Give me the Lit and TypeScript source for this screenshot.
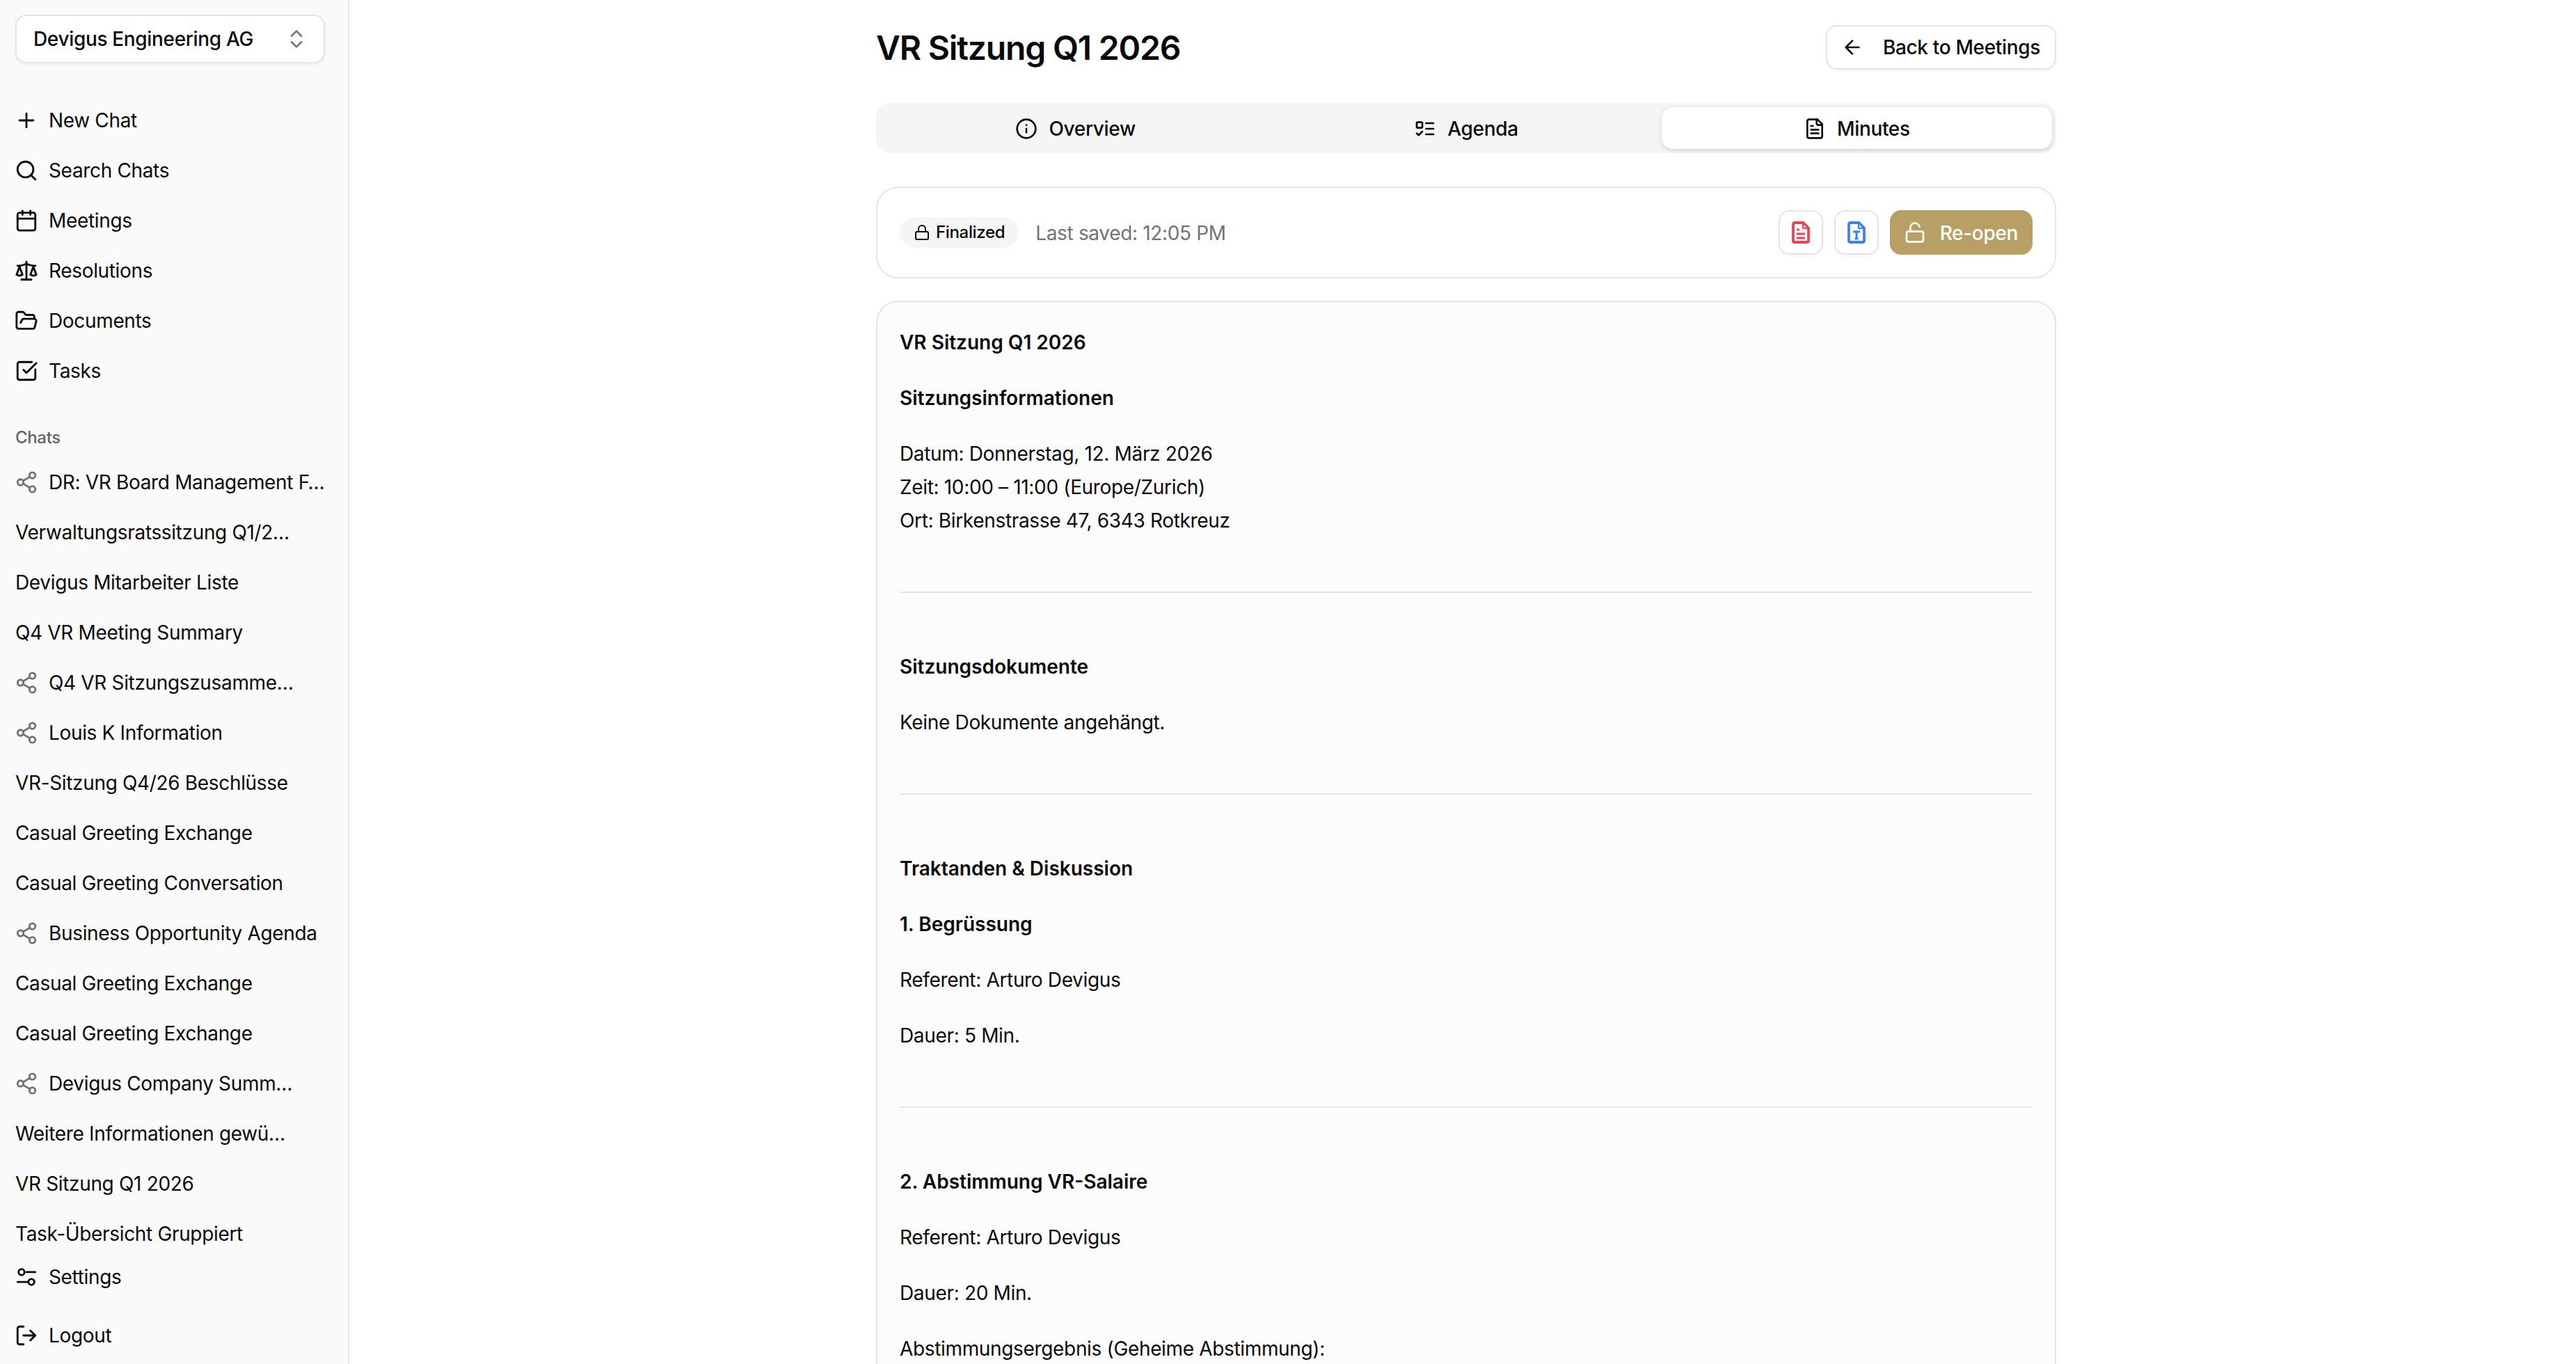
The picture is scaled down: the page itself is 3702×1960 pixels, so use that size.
import { LitElement, html, css, svg } from "lit";
import { customElement } from "lit/decorators.js";

const I: Record<string, any> = {
  plus: svg`<path d="M5 12h14M12 5v14"/>`,
  search: svg`<circle cx="11" cy="11" r="8"/><path d="m21 21-4.3-4.3"/>`,
  calendar: svg`<path d="M8 2v4M16 2v4"/><rect x="3" y="4" width="18" height="18" rx="2"/><path d="M3 10h18"/>`,
  scale: svg`<path d="m16 16 3-8 3 8c-.87.65-1.92 1-3 1s-2.13-.35-3-1Z"/><path d="m2 16 3-8 3 8c-.87.65-1.92 1-3 1s-2.13-.35-3-1Z"/><path d="M7 21h10M12 3v18M3 7h2c2 0 5-1 7-2 2 1 5 2 7 2h2"/>`,
  folder: svg`<path d="m6 14 1.5-2.9A2 2 0 0 1 9.24 10H20a2 2 0 0 1 1.94 2.5l-1.54 6a2 2 0 0 1-1.95 1.5H4a2 2 0 0 1-2-2V5a2 2 0 0 1 2-2h3.9a2 2 0 0 1 1.69.9l.81 1.2a2 2 0 0 0 1.67.9H18a2 2 0 0 1 2 2v2"/>`,
  check: svg`<path d="M21 10.5V19a2 2 0 0 1-2 2H5a2 2 0 0 1-2-2V5a2 2 0 0 1 2-2h12.5"/><path d="m9 11 3 3L22 4"/>`,
  share: svg`<circle cx="18" cy="5" r="3"/><circle cx="6" cy="12" r="3"/><circle cx="18" cy="19" r="3"/><path d="m8.59 13.51 6.83 3.98M15.41 6.51l-6.82 3.98"/>`,
  settings: svg`<path d="M14 17H3M21 7h-9"/><circle cx="7" cy="7" r="3"/><circle cx="17" cy="17" r="3"/>`,
  logout: svg`<path d="M9 21H5a2 2 0 0 1-2-2V5a2 2 0 0 1 2-2h4"/><path d="m16 17 5-5-5-5M21 12H9"/>`,
  updown: svg`<path d="m7 15 5 5 5-5M7 9l5-5 5 5"/>`,
  back: svg`<path d="m12 19-7-7 7-7M19 12H5"/>`,
  info: svg`<circle cx="12" cy="12" r="10"/><path d="M12 16v-4M12 8h.01"/>`,
  todo: svg`<rect x="3" y="5" width="6" height="6" rx="1"/><path d="m3 17 2 2 4-4M13 6h8M13 12h8M13 18h8"/>`,
  file: svg`<path d="M15 2H6a2 2 0 0 0-2 2v16a2 2 0 0 0 2 2h12a2 2 0 0 0 2-2V7Z"/><path d="M14 2v4a2 2 0 0 0 2 2h4M10 9H8M16 13H8M16 17H8"/>`,
  lock: svg`<rect x="3" y="11" width="18" height="11" rx="2"/><path d="M7 11V7a5 5 0 0 1 10 0v4"/>`,
  open: svg`<rect x="3" y="11" width="18" height="11" rx="2"/><path d="M7 11V7a5 5 0 0 1 9.9-1"/>`,
};

const icon = (n: string, size = 34, w = 2) => html`<svg class="ic" width=${size} height=${size} viewBox="0 0 24 24" fill="none" stroke="currentColor" stroke-width=${w} stroke-linecap="round" stroke-linejoin="round">${I[n]}</svg>`;

const NAV = [["plus","New Chat"],["search","Search Chats"],["calendar","Meetings"],["scale","Resolutions"],["folder","Documents"],["check","Tasks"]];
const CHATS: [string, boolean][] = [
  ["DR: VR Board Management F…",true],["Verwaltungsratssitzung Q1/2…",false],["Devigus Mitarbeiter Liste",false],["Q4 VR Meeting Summary",false],
  ["Q4 VR Sitzungszusamme…",true],["Louis K Information",true],["VR-Sitzung Q4/26 Beschlüsse",false],["Casual Greeting Exchange",false],
  ["Casual Greeting Conversation",false],["Business Opportunity Agenda",true],["Casual Greeting Exchange",false],["Casual Greeting Exchange",false],
  ["Devigus Company Summ…",true],["Weitere Informationen gewü…",false],["VR Sitzung Q1 2026",false],["Task-Übersicht Gruppiert",false],
];

@customElement("app-root")
export class AppRoot extends LitElement {
  static styles = css`
    :host { display: flex; height: 100vh; overflow: hidden; background: #fff; color: #0a0a0a; font-family: Inter, "Liberation Sans", sans-serif; font-size: 28px; line-height: 48px; letter-spacing: -.34px; }
    * { box-sizing: border-box; }
    .ic { flex: none; display: block; }
    .side { width: 502px; flex: none; height: 100%; background: #fafafa; border-right: 2px solid #e5e5e5; display: flex; flex-direction: column; padding-top: 21px; }
    .select { margin: 0 33px 0 22px; height: 70px; flex: none; border: 2px solid #e5e5e5; border-radius: 16px; background: #fff; box-shadow: 0 2px 4px rgba(0,0,0,.05); display: flex; align-items: center; justify-content: space-between; padding: 0 22px 0 24px; font-weight: 500; }
    .select .ic { color: #737373; }
    .nav { margin-top: 46px; flex: none; }
    .row { height: 72px; display: flex; align-items: center; gap: 15px; padding-left: 21px; white-space: nowrap; }
    .label { margin: 36px 0 0 22px; height: 48px; flex: none; font-size: 24px; font-weight: 500; color: #666; display: flex; align-items: center; }
    .chats { flex: 1; min-height: 0; overflow: hidden; margin-top: 4px; }
    .chat { padding-left: 22px; }
    .chat.s { padding-left: 21px; }
    .chat .ic { color: #737373; }
    .foot { flex: none; padding-bottom: 5px; display: flex; flex-direction: column; gap: 12px; }
    .main { flex: 1; min-width: 0; overflow: hidden; }
    .wrap { width: 1696px; margin-left: 757px; }
    .head { height: 148px; display: flex; justify-content: space-between; padding-top: 36px; }
    h1 { margin: 1px 0 0; font-size: 48px; line-height: 64px; font-weight: 600; letter-spacing: -1.2px; }
    .btn { height: 64px; display: flex; align-items: center; border: 2px solid #e5e5e5; border-radius: 16px; background: #fff; box-shadow: 0 2px 4px rgba(0,0,0,.05); font-weight: 500; }
    .back { padding: 0 21px 0 20px; gap: 28px; }
    .tabs { height: 72px; background: #f5f5f5; border-radius: 20px; padding: 6px; display: grid; grid-template-columns: repeat(3, 1fr); }
    .tab { display: flex; align-items: center; justify-content: center; gap: 16px; font-weight: 500; border-radius: 16px; padding-top: 1px; }
    .tab.on { background: #fff; box-shadow: 0 2px 6px rgba(0,0,0,.16); }
    .bar { margin-top: 48px; height: 132px; border: 2px solid #e5e5e5; border-radius: 32px; padding: 32px; display: flex; align-items: center; }
    .pill { height: 44px; display: flex; align-items: center; gap: 8px; padding: 0 20px; border-radius: 22px; background: #f5f5f5; font-size: 24px; font-weight: 500; }
    .saved { margin-left: 24px; color: #737373; padding-top: 2px; }
    .acts { margin-left: auto; display: flex; gap: 16px; }
    .sq { width: 64px; justify-content: center; }
    .reopen { height: 64px; display: flex; align-items: center; gap: 20px; padding: 0 21px 0 20px; background: #b8a065; color: #fff; border-radius: 16px; font-weight: 500; }
    .reopen span { padding-top: 2px; }
    .doc { margin-top: 32px; border: 2px solid #e5e5e5; border-radius: 32px; background: #fcfcfc; padding: 34px 32px 32px; }
    .doc p { margin: 0 0 32px; }
    .doc b { font-weight: 600; display: block; letter-spacing: 0; }
    hr { border: 0; border-top: 2px solid #e5e5e5; margin: 78px 0 82px; }
  `;

  render() {
    return html`
      <aside class="side">
        <div class="select"><span>Devigus Engineering AG</span>${icon("updown", 34, 1.8)}</div>
        <nav class="nav">${NAV.map(([i, t]) => html`<div class="row">${icon(i)}<span>${t}</span></div>`)}</nav>
        <div class="label">Chats</div>
        <div class="chats">${CHATS.map(([t, s]) => html`<div class="row chat ${s ? "s" : ""}">${s ? icon("share") : ""}<span>${t}</span></div>`)}</div>
        <div class="foot">
          <div class="row">${icon("settings")}<span>Settings</span></div>
          <div class="row">${icon("logout")}<span>Logout</span></div>
        </div>
      </aside>
      <main class="main"><div class="wrap">
        <header class="head"><h1>VR Sitzung Q1 2026</h1><div class="btn back">${icon("back", 32)}<span>Back to Meetings</span></div></header>
        <div class="tabs">
          <div class="tab">${icon("info", 32)}<span>Overview</span></div>
          <div class="tab">${icon("todo", 32)}<span>Agenda</span></div>
          <div class="tab on">${icon("file", 32)}<span>Minutes</span></div>
        </div>
        <div class="bar">
          <div class="pill">${icon("lock", 24)}<span>Finalized</span></div>
          <span class="saved">Last saved: 12:05 PM</span>
          <div class="acts">
            <div class="btn sq"><svg width="26" height="32" viewBox="0 0 26 32" fill="none" stroke="#f43f4e" stroke-width="3.8" stroke-linejoin="round"><path d="M16.5 2H4a2 2 0 0 0-2 2v24a2 2 0 0 0 2 2h18a2 2 0 0 0 2-2V9.5Z"/><path d="M16 2v8h8" stroke-width="2"/><path d="M7 12h4M7 18h12M7 24h12" stroke-width="3"/></svg></div>
            <div class="btn sq"><svg width="26" height="32" viewBox="0 0 26 32" fill="none" stroke="#3b82f6" stroke-width="3.8" stroke-linejoin="round"><path d="M16.5 2H4a2 2 0 0 0-2 2v24a2 2 0 0 0 2 2h18a2 2 0 0 0 2-2V9.5Z"/><path d="M16 2v8h8" stroke-width="2"/><path d="M8 15h10M13 15v10M10.5 25h5" stroke-width="3"/></svg></div>
            <div class="reopen">${icon("open", 32)}<span>Re-open</span></div>
          </div>
        </div>
        <article class="doc">
          <p><b>VR Sitzung Q1 2026</b></p>
          <p><b>Sitzungsinformationen</b></p>
          <p>Datum: Donnerstag, 12. März 2026<br>Zeit: 10:00 – 11:00 (Europe/Zurich)<br>Ort: Birkenstrasse 47, 6343 Rotkreuz</p>
          <hr>
          <p><b>Sitzungsdokumente</b></p>
          <p>Keine Dokumente angehängt.</p>
          <hr>
          <p><b>Traktanden &amp; Diskussion</b></p>
          <p><b>1. Begrüssung</b></p>
          <p>Referent: Arturo Devigus</p>
          <p>Dauer: 5 Min.</p>
          <hr>
          <p><b>2. Abstimmung VR-Salaire</b></p>
          <p>Referent: Arturo Devigus</p>
          <p>Dauer: 20 Min.</p>
          <p>Abstimmungsergebnis (Geheime Abstimmung):</p>
        </article>
      </div></main>
    `;
  }
}
